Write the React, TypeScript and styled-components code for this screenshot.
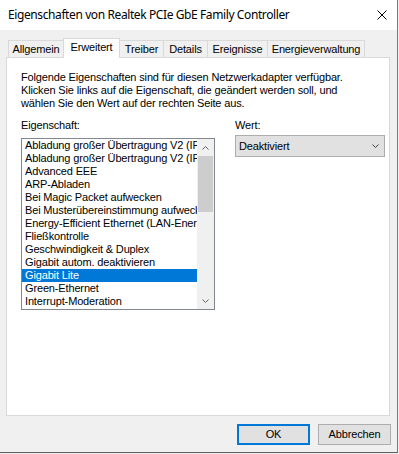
import React from 'react'
import styled, { createGlobalStyle } from 'styled-components'

const GlobalStyle = createGlobalStyle`
  html, body {
    margin: 0;
    padding: 0;
    background: #f0f0f0;
  }
  body {
    font-family: 'Liberation Sans', Arial, sans-serif;
    font-size: 11px;
    letter-spacing: -0.15px;
    color: #000;
  }
  * {
    box-sizing: border-box;
  }
`

const Window = styled.div`
  width: 398px;
  height: 453px;
  background: #f0f0f0;
  border-right: 1px solid #7a7a7a;
  border-bottom: 1px solid #5e5e5e;
  display: flex;
  flex-direction: column;
`

const TitleBar = styled.div`
  height: 30px;
  background: #fff;
  display: flex;
  align-items: center;
  justify-content: space-between;
  padding: 0 10px 0 8px;
`

const Title = styled.span`
  font-family: 'Noto Sans', 'Open Sans', sans-serif;
  font-size: 12px;
  letter-spacing: -0.4px;
  line-height: 16px;
`

const Body = styled.div`
  flex: 1;
  display: flex;
  flex-direction: column;
  padding: 8px 6px 0 6px;
`

const TabStrip = styled.div`
  display: flex;
  align-items: flex-end;
  height: 19px;
  padding-left: 2px;
  position: relative;
  z-index: 1;
`

const Tab = styled.div<{ $active?: boolean; $w: number }>`
  width: ${({ $w }) => $w}px;
  height: ${({ $active }) => ($active ? 20 : 17)}px;
  margin-bottom: ${({ $active }) => ($active ? -1 : 0)}px;
  margin-left: -1px;
  padding-top: 2px;
  border: 1px solid #d9d9d9;
  border-bottom: none;
  background: ${({ $active }) => ($active ? '#fff' : '#f0f0f0')};
  text-align: center;
  line-height: 13px;
  white-space: nowrap;
  position: relative;
  z-index: ${({ $active }) => ($active ? 1 : 0)};

  &:first-child {
    margin-left: 0;
  }
`

const Panel = styled.div`
  width: 384px;
  height: 359px;
  border: 1px solid #d9d9d9;
  background: #fff;
  padding: 13px 0 0 14px;
`

const Intro = styled.p`
  margin: 0;
  line-height: 13px;
`

const Columns = styled.div`
  display: flex;
  gap: 20px;
  margin-top: 9px;
`

const Column = styled.div<{ $w: number; $gap: number }>`
  width: ${({ $w }) => $w}px;
  display: flex;
  flex-direction: column;
  gap: ${({ $gap }) => $gap}px;
`

const Label = styled.div`
  line-height: 13px;
`

const ListBox = styled.div`
  height: 172px;
  border: 1px solid #828790;
  display: flex;
`

const Items = styled.div`
  flex: 1;
  overflow: hidden;
`

const Item = styled.div<{ $selected?: boolean }>`
  height: 13px;
  line-height: 13px;
  padding-left: 3px;
  white-space: nowrap;
  overflow: hidden;
  background: ${({ $selected }) => ($selected ? '#0078d7' : 'transparent')};
  color: ${({ $selected }) => ($selected ? '#fff' : '#000')};
`

const ScrollBar = styled.div`
  width: 17px;
  background: #f0f0f0;
  display: flex;
  flex-direction: column;
`

const ScrollArrow = styled.div`
  height: 17px;
  display: flex;
  align-items: center;
  justify-content: center;
`

const Track = styled.div`
  flex: 1;
  padding: 0 1px;
`

const Thumb = styled.div`
  height: 56px;
  background: #cdcdcd;
`

const Select = styled.div`
  height: 22px;
  border: 1px solid #adadad;
  background: #e1e1e1;
  display: flex;
  align-items: center;
  justify-content: space-between;
  padding: 0 5px 0 3px;
  line-height: 13px;
`

const ButtonRow = styled.div`
  display: flex;
  justify-content: flex-end;
  gap: 8px;
  margin-top: 8px;
`

const Button = styled.div<{ $default?: boolean }>`
  width: 73px;
  height: 21px;
  background: #e1e1e1;
  border: ${({ $default }) => ($default ? '2px solid #0078d7' : '1px solid #adadad')};
  display: flex;
  align-items: center;
  justify-content: center;
  line-height: 13px;
`

const Chevron: React.FC<{ up?: boolean; color?: string }> = ({ up, color = '#606060' }) => (
  <svg width="7" height="4" viewBox="0 0 7 4">
    <polyline
      points={up ? '0.5,3.5 3.5,0.5 6.5,3.5' : '0.5,0.5 3.5,3.5 6.5,0.5'}
      fill="none"
      stroke={color}
      strokeWidth="1"
    />
  </svg>
)

const CloseGlyph = () => (
  <svg width="10" height="10" viewBox="0 0 10 10">
    <path d="M0.5 0.5 L9.5 9.5 M9.5 0.5 L0.5 9.5" stroke="#000" strokeWidth="1" />
  </svg>
)

const tabs = [
  { label: 'Allgemein', w: 56 },
  { label: 'Erweitert', w: 57, active: true },
  { label: 'Treiber', w: 45 },
  { label: 'Details', w: 45 },
  { label: 'Ereignisse', w: 61 },
  { label: 'Energieverwaltung', w: 98 },
]

const properties = [
  'Abladung großer Übertragung V2 (IPv4)',
  'Abladung großer Übertragung V2 (IPv6)',
  'Advanced EEE',
  'ARP-Abladen',
  'Bei Magic Packet aufwecken',
  'Bei Musterübereinstimmung aufwecken',
  'Energy-Efficient Ethernet (LAN-Energiesparmodus)',
  'Fließkontrolle',
  'Geschwindigkeit & Duplex',
  'Gigabit autom. deaktivieren',
  'Gigabit Lite',
  'Green-Ethernet',
  'Interrupt-Moderation',
]

const App: React.FC = () => (
  <>
    <GlobalStyle />
    <Window>
      <TitleBar>
        <Title>Eigenschaften von Realtek PCIe GbE Family Controller</Title>
        <CloseGlyph />
      </TitleBar>
      <Body>
        <TabStrip>
          {tabs.map(t => (
            <Tab key={t.label} $w={t.w} $active={t.active}>
              {t.label}
            </Tab>
          ))}
        </TabStrip>
        <Panel>
          <Intro>
            Folgende Eigenschaften sind für diesen Netzwerkadapter verfügbar.
            <br />
            Klicken Sie links auf die Eigenschaft, die geändert werden soll, und
            <br />
            wählen Sie den Wert auf der rechten Seite aus.
          </Intro>
          <Columns>
            <Column $w={194} $gap={6}>
              <Label>Eigenschaft:</Label>
              <ListBox>
                <Items>
                  {properties.map(p => (
                    <Item key={p} $selected={p === 'Gigabit Lite'}>
                      {p}
                    </Item>
                  ))}
                </Items>
                <ScrollBar>
                  <ScrollArrow>
                    <Chevron up />
                  </ScrollArrow>
                  <Track>
                    <Thumb />
                  </Track>
                  <ScrollArrow>
                    <Chevron />
                  </ScrollArrow>
                </ScrollBar>
              </ListBox>
            </Column>
            <Column $w={150} $gap={3}>
              <Label>Wert:</Label>
              <Select>
                <span>Deaktiviert</span>
                <Chevron color="#404040" />
              </Select>
            </Column>
          </Columns>
        </Panel>
        <ButtonRow>
          <Button $default>OK</Button>
          <Button>Abbrechen</Button>
        </ButtonRow>
      </Body>
    </Window>
  </>
)

export default App
